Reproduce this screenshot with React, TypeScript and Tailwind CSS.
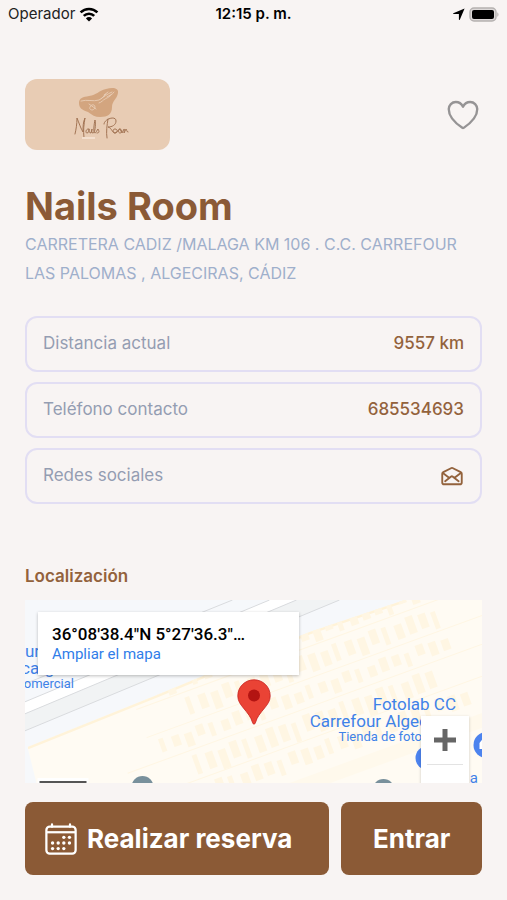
import { useState } from "react";
import type { ReactNode } from "react";
import { IoCalendarOutline, IoHeart, IoHeartOutline, IoMailOpenOutline } from "react-icons/io5";

interface Salon {
  name: string;
  address: string;
  distance: string;
  phone: string;
  email: string;
  coordinates: string;
}

const salon: Salon = {
  name: "Nails Room",
  address: "CARRETERA CADIZ /MALAGA KM 106 . C.C. CARREFOUR LAS PALOMAS , ALGECIRAS, CÁDIZ",
  distance: "9557 km",
  phone: "685534693",
  email: "mailto:",
  coordinates: "36°08'38.4\"N 5°27'36.3\"…",
};

function StatusBar() {
  return (
    <div className="grid h-7 grid-cols-3 items-center px-2 font-['Inter',sans-serif] text-[15px] text-black">
      <div className="flex items-center gap-1">
        <span className="text-[#222]">Operador</span>
        <svg viewBox="0 0 20 15" className="h-[15px] w-5" fill="none" stroke="currentColor" strokeWidth="2.6" aria-hidden="true">
          <path d="M1.6 5.4a12 12 0 0 1 16.8 0" />
          <path d="M4.8 8.9a7.4 7.4 0 0 1 10.4 0" />
          <path d="M10 14.6 6.9 11.4a4.4 4.4 0 0 1 6.2 0Z" fill="currentColor" stroke="none" />
        </svg>
      </div>
      <span className="text-center font-semibold">12:15 p. m.</span>
      <div className="flex items-center justify-end gap-1">
        <svg viewBox="0 0 12 12" className="size-3" fill="currentColor" aria-hidden="true">
          <path d="M11.6.4.3 5.2c-.4.2-.3.9.2.9h5.4v5.400c0 .5.7.6.9.2Z" />
        </svg>
        <svg viewBox="0 0 30 15" className="h-[15px] w-[30px]" aria-hidden="true">
          <rect x="1" y="1" width="26" height="13" rx="4" fill="#ddd9d8" stroke="#b5b1b0" strokeWidth="1.4" />
          <rect x="3" y="3" width="22" height="9" rx="2" fill="#000" />
          <path d="M28.3 5.2c1.6.8 1.6 3.8 0 4.6Z" fill="#b5b1b0" />
        </svg>
      </div>
    </div>
  );
}

// Logo del salón: mancha con mano y firma manuscrita
function SalonLogo() {
  return (
    <svg viewBox="0 0 145 71" className="h-[71px] w-[145px] rounded-xl bg-[#e8ccb4]" role="img" aria-label="Nails Room">
      <path
        d="M54 24c0-5 4-6 10-7 8-1 9-5 17-7 7-2 13-1 12 4-1 6-6 8-6 14 0 7-4 10-12 10-5 0-8-2-12-5-6-2-9-4-9-9Z"
        fill="#d3a57f"
      />
      <g fill="none" stroke="#e9cdb5" strokeWidth=".9" strokeLinecap="round">
        <path d="M56 22c6-2 12 1 18-1 5-3 8-6 13-8M74 24c3-1 4-3 6-4s5-2 9-7M65 28c1-3 5-3 5 0s-4 4-5 2ZM76 20l5-5M79 16l4-3M82 18l5-3M64 25l7 5" />
      </g>
      <g fill="none" stroke="#a27454" strokeWidth="1" strokeLinecap="round" strokeLinejoin="round">
        <path d="M50 55c1-4 2-10 2-16 2 5 4 11 6 14 0-5 0-10 2-14-1 6-2 12-1 20" />
        <path d="M64 50c-3-1-4 4-2 4s2-3 2-4c0 2 0 4 2 4l1-4c0 2-1 4 1 4 2 0 3-8 2-13-1 4-2 13 0 13 1 0 2-3 3-4 1 2 2 4-1 4" />
        <path d="M82 59c-1-6 0-13 1-19M79 45c0-5 12-9 12-3 0 4-4 6-8 6 4 1 4 6 7 6 3 0 3-4 0-4s-2 4 0 4c3-1 3-4 5-4s2 4 0 4-2-4 0-4l2 4 2-4c1 0 0 2 0 4l2-4c1 0 0 3 2 3" />
      </g>
      <path d="M57 59h13" stroke="#f3dfce" strokeWidth="2" />
    </svg>
  );
}

interface InfoRowProps {
  label: string;
  children: ReactNode;
}

function InfoRow({ label, children }: InfoRowProps) {
  return (
    <div className="flex h-14 items-center justify-between rounded-xl border-2 border-[#e2def3] px-4">
      <dt className="text-[#949db2]">{label}</dt>
      <dd className="font-medium text-[#93623c]">{children}</dd>
    </div>
  );
}

// Plazas y edificios del centro comercial, en filas paralelas a la carretera
const buildingRows = [
  { y: 24, from: 0, count: 24, height: 15 },
  { y: 50, from: 3, count: 21, height: 18 },
  { y: 80, from: 0, count: 24, height: 14 },
  { y: 107, from: 2, count: 20, height: 20 },
  { y: 137, from: 0, count: 24, height: 16 },
];

function MapTiles() {
  return (
    <svg viewBox="0 0 458 183" preserveAspectRatio="xMidYMid slice" className="h-full w-full" aria-hidden="true">
      <defs>
        <clipPath id="mall">
          <path d="M3 147 130 96 285 32 380 0h78v183H12Z" />
        </clipPath>
      </defs>
      <rect width="458" height="183" fill="#f6f8fb" />
      <path d="M0 102 245 0h27L0 114Z" fill="#fff" />
      <path d="M0 114 272 0h43L0 131Z" fill="#f1f3f4" />
      <path d="M0 84 208 0M0 102 245 0M0 114 272 0M0 131 315 0" stroke="#d9dbde" fill="none" />
      <path d="M3 147 130 96 285 32 380 0h78v183H12Z" fill="#fffbf3" />
      <g clipPath="url(#mall)">
        <path d="M3 147 130 96 285 32 380 0" stroke="#fff3d9" strokeWidth="5" fill="none" />
        <g transform="rotate(-20 300 100)" fill="#fff6e3">
          {buildingRows.map((row) =>
            Array.from({ length: row.count }, (_, i) => (
              <rect
                key={`${row.y}-${i}`}
                x={130 + (row.from + i) * 13}
                y={row.y + (i % 3) * 2}
                width={i % 4 === 0 ? 5 : 8}
                height={row.height - (i % 2) * 3}
              />
            )),
          )}
          <path d="M120 44h360v1H120zM120 74h360v1H120zM90 101h390v1H90zM60 131h420v1H60z" />
          <path d="M70 166h400v14H70z" fill="#fff9ec" />
        </g>
      </g>
      <g fill="#78909c">
        <circle cx="118" cy="187" r="11" />
        <circle cx="359" cy="190" r="11" />
      </g>
      <g fill="#4c83ee">
        <circle cx="403" cy="158" r="12" />
        <circle cx="462" cy="145" r="13" />
      </g>
      <path d="M455 149v-6l3-4v10Z" fill="#fff" />
      <rect x="13" y="178" width="51" height="5" fill="#fff" />
      <path d="M15 182h47" stroke="#555" strokeWidth="2" />
    </svg>
  );
}

function LocationMap({ coordinates }: { coordinates: string }) {
  return (
    <div className="relative h-[183px] overflow-hidden font-['Roboto',sans-serif]">
      <MapTiles />

      {/* Etiquetas de comercios */}
      <div className="absolute top-[43px] -left-2 text-[17px] leading-[17px] text-[#3f82e8]">
        <p className="pl-2">ur</p>
        <p className="pl-1">carg</p>
        <p className="text-[13px] leading-[14px]">comercial</p>
      </div>
      <div className="absolute top-24 right-[26px] text-right text-[17px] leading-[17px] text-[#3f82e8]">
        <p>Fotolab CC</p>
        <p className="pr-7">Carrefour Algec</p>
        <p className="pr-[34px] text-[13px] leading-[14px]">Tienda de foto</p>
      </div>
      <p className="absolute top-[170px] right-1 text-[15px] leading-4 text-[#3f82e8]">a</p>

      <svg viewBox="0 0 34 46" className="absolute top-[79px] left-1/2 h-[46px] w-[34px] -translate-x-1/2" aria-hidden="true">
        <path
          d="M17 .8C8 .8.8 7.9.8 16.8c0 5 2.4 8.3 5.6 12.2 4.4 5.4 7.5 8.8 9.2 14.8.5 1.8 2.3 1.8 2.8 0 1.7-6 4.8-9.4 9.2-14.8 3.2-3.9 5.6-7.2 5.6-12.2C33.2 7.9 26 .8 17 .8Z"
          fill="#ea4335"
          stroke="#c5221f"
          strokeWidth=".8"
        />
        <circle cx="17" cy="16.5" r="6" fill="#b31412" />
      </svg>

      <div className="absolute top-3 left-[13px] h-[63px] w-[261px] bg-white px-[14px] py-3 shadow-[0_1px_3px_rgba(0,0,0,0.25)]">
        <p className="truncate text-[17px] leading-5 font-medium text-black">{coordinates}</p>
        <a href="#mapa" className="block text-[15px] leading-5 text-[#2f7de9]">
          Ampliar el mapa
        </a>
      </div>

      <div className="absolute top-[116px] right-[13px] w-12 bg-white shadow-[0_1px_3px_rgba(0,0,0,0.2)]">
        <button type="button" aria-label="Acercar" className="flex h-12 w-full items-center justify-center">
          <svg viewBox="0 0 24 24" className="size-6" aria-hidden="true">
            <path d="M12 1v22M1 12h22" stroke="#666" strokeWidth="5" />
          </svg>
        </button>
        <div className="mx-[6px] h-px bg-[#e3e3e3]" />
        <button type="button" aria-label="Alejar" className="h-12 w-full" />
      </div>
    </div>
  );
}

export default function App() {
  const [favorite, setFavorite] = useState(false);

  return (
    <div className="flex min-h-screen flex-col bg-[#f8f4f3] font-['Inter',sans-serif]">
      <StatusBar />

      <main className="flex flex-col px-[25px] pt-[51px]">
        <div className="flex items-center justify-between">
          <SalonLogo />
          <button
            type="button"
            aria-label="Favorito"
            aria-pressed={favorite}
            onClick={() => setFavorite(!favorite)}
            className="text-[#969495]"
          >
            {favorite ? <IoHeart className="size-[38px]" /> : <IoHeartOutline className="size-[38px]" />}
          </button>
        </div>

        <h1 className="mt-8 text-[38px] leading-[48px] font-bold text-[#8b5a36]">{salon.name}</h1>
        <p className="text-base leading-[29px] text-[#9fafcb]">{salon.address}</p>

        <dl className="mt-7 flex flex-col gap-[10px] text-[17px]">
          <InfoRow label="Distancia actual">{salon.distance}</InfoRow>
          <InfoRow label="Teléfono contacto">{salon.phone}</InfoRow>
          <InfoRow label="Redes sociales">
            <a href={salon.email} aria-label="Correo electrónico" className="block">
              <IoMailOpenOutline className="size-6 [&_path]:stroke-[40px]" />
            </a>
          </InfoRow>
        </dl>

        <section className="mt-[60px]">
          <h2 className="mb-3 text-[17px] leading-6 font-semibold text-[#93623c]">Localización</h2>
          <LocationMap coordinates={salon.coordinates} />
        </section>
      </main>

      <footer className="grid grid-cols-[305fr_141fr] gap-3 px-[25px] pt-[19px] pb-6 text-[26px] font-bold text-white">
        <button type="button" className="flex h-[73px] items-center gap-2 rounded-lg bg-[#8b5a36] px-[18px]">
          <IoCalendarOutline className="size-9 shrink-0" />
          <span className="whitespace-nowrap">Realizar reserva</span>
        </button>
        <button type="button" className="h-[73px] rounded-lg bg-[#8b5a36]">
          Entrar
        </button>
      </footer>
    </div>
  );
}
